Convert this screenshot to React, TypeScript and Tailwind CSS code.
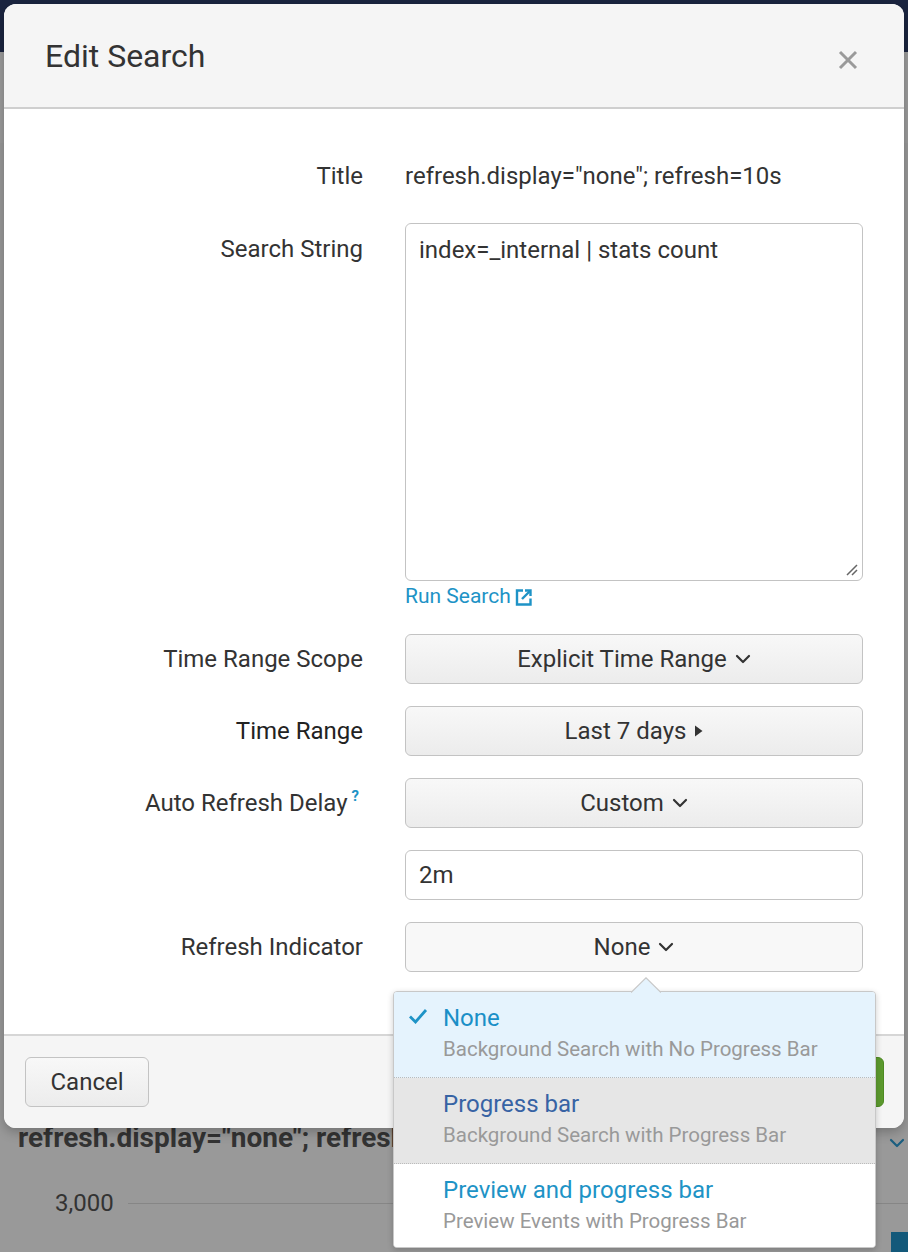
import React from "react";

function ChevronDown({ className = "" }: { className?: string }) {
  return (
    <svg className={className} width="16" height="10" viewBox="0 0 16 10" fill="none">
      <path d="M2 2 L8 8 L14 2" stroke="currentColor" strokeWidth="2.2" strokeLinecap="round" strokeLinejoin="round" />
    </svg>
  );
}

function CaretRight() {
  return (
    <svg width="9" height="12" viewBox="0 0 9 12">
      <path d="M1 0.5 L8.5 6 L1 11.5 Z" fill="#333" />
    </svg>
  );
}

function ExternalIcon() {
  return (
    <svg width="17" height="17" viewBox="0 0 17 17" fill="none">
      <path d="M8 1.5 H2 V15.5 H15.5 V9.5" stroke="#1e93c6" strokeWidth="2.4" />
      <path d="M10 1.5 H15.5 V7" stroke="#1e93c6" strokeWidth="2.4" />
      <path d="M15 2 L7 10" stroke="#1e93c6" strokeWidth="2.4" />
    </svg>
  );
}

function SelectButton({ children, light = false }: { children: React.ReactNode; light?: boolean }) {
  return (
    <div
      className={`flex h-[50px] w-[458px] items-center justify-center gap-[8px] rounded-[6px] border-[1.5px] border-[#c3c3c3] text-[24px] text-[#333] ${
        light ? "bg-[#f8f8f8]" : "bg-gradient-to-b from-[#f8f8f8] to-[#ececec]"
      }`}
    >
      {children}
    </div>
  );
}

function Row({ label, children, align = "center" }: { label: React.ReactNode; children: React.ReactNode; align?: "center" | "start" }) {
  return (
    <div className={`flex ${align === "center" ? "items-center" : "items-start"}`}>
      <div className={`w-[359px] text-right text-[24px] text-[#333] ${align === "start" ? "pt-[8px]" : ""}`}>{label}</div>
      <div className="ml-[42px]">{children}</div>
    </div>
  );
}

export default function App() {
  return (
    <div className="relative h-[1252px] w-[908px] overflow-hidden bg-[#999] font-['Roboto',sans-serif]">
      {/* background page */}
      <div className="h-[52px] bg-[#1b2540]" />
      <div className="h-[91px] bg-[#9c9c9c]" />
      <div className="flex flex-col">
        <div className="mt-[978px] whitespace-nowrap pl-[18px] text-[28px] font-bold leading-[34px] text-[#333]">
          refresh.display="none"; refresh=10s
        </div>
        <div className="mt-[30px] flex items-center">
          <div className="w-[124px] pl-[55px] text-[24px] text-[#333]">3,000</div>
          <div className="ml-[4px] h-[1px] flex-1 bg-[#868686]" />
        </div>
      </div>
      <div className="absolute right-[3px] top-[1138px] text-[#1b5f80]">
        <ChevronDown />
      </div>
      <div className="absolute right-0 top-[1232px] h-[20px] w-[17px] bg-[#13597a]" />

      {/* modal */}
      <div className="absolute left-[4px] top-[4px] flex h-[1124px] w-[900px] flex-col overflow-hidden rounded-[12px] bg-white shadow-[0_4px_12px_rgba(0,0,0,0.25)]">
        <div className="flex h-[105px] shrink-0 items-center justify-between border-b-[2px] border-[#cfcfcf] bg-[#f5f5f5] pl-[41px] pr-[46px]">
          <div className="text-[32px] leading-none text-[#333]">Edit Search</div>
          <svg width="20" height="20" viewBox="0 0 20 20" className="mt-[8px]">
            <path d="M2 2 L18 18 M18 2 L2 18" stroke="#9a9a9a" strokeWidth="3" />
          </svg>
        </div>

        <div className="flex flex-1 flex-col gap-[22px] pt-[42px]">
          <Row label="Title">
            <div className="flex h-[50px] items-center text-[24px] text-[#333]">refresh.display="none"; refresh=10s</div>
          </Row>
          <div className="flex flex-col">
            <Row label="Search String" align="start">
              <div className="relative h-[358px] w-[458px] rounded-[6px] border-[1.5px] border-[#c3c3c3] bg-white px-[13px] pt-[8px] text-[24px] text-[#333]">
                index=_internal | stats count
                <svg className="absolute bottom-[4px] right-[4px]" width="12" height="12" viewBox="0 0 12 12">
                  <path d="M1 11 L11 1 M6 11 L11 6" stroke="#666" strokeWidth="1.5" />
                </svg>
              </div>
            </Row>
            <div className="ml-[401px] mt-[1px] flex h-[30px] items-center gap-[4px] text-[21px] text-[#1e93c6]">
              Run Search
              <ExternalIcon />
            </div>
          </div>
          <Row label="Time Range Scope">
            <SelectButton>
              Explicit Time Range <ChevronDown />
            </SelectButton>
          </Row>
          <Row label={<span className="text-[#222]">Time Range</span>}>
            <SelectButton>
              Last 7 days <CaretRight />
            </SelectButton>
          </Row>
          <Row
            label={
              <span className="pr-[4px]">
                Auto Refresh Delay
                <span className="relative -top-[10px] ml-[4px] text-[15px] font-bold text-[#1e93c6]">?</span>
              </span>
            }
          >
            <SelectButton>
              Custom <ChevronDown />
            </SelectButton>
          </Row>
          <Row label="">
            <div className="flex h-[50px] w-[458px] items-center rounded-[6px] border-[1.5px] border-[#c3c3c3] bg-white px-[13px] text-[24px] text-[#333]">
              2m
            </div>
          </Row>
          <Row label="Refresh Indicator">
            <SelectButton light>
              None <ChevronDown />
            </SelectButton>
          </Row>
        </div>

        <div className="flex h-[94px] shrink-0 items-start justify-between border-t-[2px] border-[#d6d6d6] bg-[#f5f5f5] pl-[21px] pr-[20px] pt-[21px]">
          <div className="flex h-[50px] w-[124px] items-center justify-center rounded-[6px] border-[1.5px] border-[#c3c3c3] bg-gradient-to-b from-[#f8f8f8] to-[#ececec] text-[24px] text-[#333]">
            Cancel
          </div>
          <div className="flex h-[50px] w-[110px] items-center justify-center rounded-[6px] border-[1.5px] border-[#4d8a22] bg-[#5c9a2e] text-[24px] text-white">
            Save
          </div>
        </div>
      </div>

      {/* dropdown popup */}
      <div className="absolute left-[393px] top-[977px] w-[483px]">
        <svg className="absolute left-[238px] top-0 z-10" width="30" height="16" viewBox="0 0 30 16">
          <path d="M0 15.5 L15 0.8 L30 15.5" fill="#e5f3fd" stroke="#c8c8c8" strokeWidth="1.2" />
        </svg>
        <div className="mt-[14px] overflow-hidden rounded-[4px] border-[1.5px] border-[#c8c8c8] bg-white shadow-[0_2px_6px_rgba(0,0,0,0.2)]">
          <div className="flex h-[86px] border-b-[1.5px] border-dotted border-[#bbb] bg-[#e5f3fd] pl-[14px] pt-[10px]">
            <div className="w-[35px] pt-[6px] text-[#1e93c6]">
              <svg width="20" height="16" viewBox="0 0 20 16">
                <path d="M2 8.5 L7.5 14 L18 2" stroke="#1e93c6" strokeWidth="2.8" fill="none" />
              </svg>
            </div>
            <div className="flex flex-col">
              <div className="text-[24px] leading-[32px] text-[#1a8fc7]">None</div>
              <div className="text-[20.5px] leading-[30px] text-[#999]">Background Search with No Progress Bar</div>
            </div>
          </div>
          <div className="flex h-[86px] border-b-[1.5px] border-dotted border-[#bbb] bg-[#e6e6e6] pl-[49px] pt-[10px]">
            <div className="flex flex-col">
              <div className="text-[24px] leading-[32px] text-[#3763a4]">Progress bar</div>
              <div className="text-[20.5px] leading-[30px] text-[#999]">Background Search with Progress Bar</div>
            </div>
          </div>
          <div className="flex h-[83px] bg-white pl-[49px] pt-[10px]">
            <div className="flex flex-col">
              <div className="text-[24px] leading-[32px] text-[#1e93c6]">Preview and progress bar</div>
              <div className="text-[20.5px] leading-[30px] text-[#999]">Preview Events with Progress Bar</div>
            </div>
          </div>
        </div>
      </div>
    </div>
  );
}
